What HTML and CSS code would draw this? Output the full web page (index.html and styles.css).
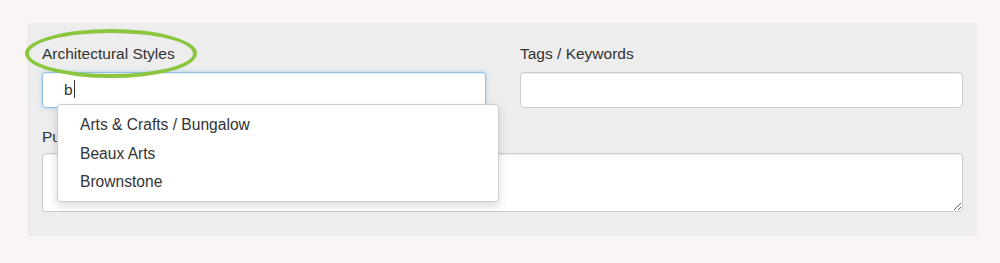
FILE: index.html
```html
<!DOCTYPE html>
<html lang="en">
<head>
    <meta charset="UTF-8">
    <meta name="viewport" content="width=device-width, initial-scale=1.0">
    <title>Property Details</title>
    <link rel="stylesheet" href="styles.css">
</head>
<body>
    <div class="panel">
        <div class="row">
            <div class="field styles-field">
                <label class="field-label">Architectural Styles</label>
                <span class="highlight"></span>
                <div class="fake-input focused">b<span class="caret"></span></div>

                <ul class="suggestions">
                    <li>Arts &amp; Crafts / Bungalow</li>
                    <li>Beaux Arts</li>
                    <li>Brownstone</li>
                </ul>
            </div>
            <div class="field">
                <label class="field-label">Tags / Keywords</label>
                <div class="fake-input"></div>
            </div>
        </div>

        <div class="field full">
            <label class="field-label">Public Notes</label>
            <textarea class="notes"></textarea>
        </div>
    </div>
</body>
</html>
```

FILE: styles.css
```css
body {
    font-family: "Liberation Sans", Arial, sans-serif;
    margin: 0;
    padding: 23px 23px 27px 27px;
    background-color: #faf5f4;
    color: #333;
}
.panel {
    background-color: #ededed;
    padding: 21px 14px 24px 15px;
}
.row {
    display: grid;
    grid-template-columns: 444px 443px;
    column-gap: 34px;
}
.field {
    position: relative;
    display: flex;
    flex-direction: column;
}
.field.full {
    margin-top: 19px;
}
.field-label {
    font-size: 15.5px;
    line-height: 20px;
    margin-bottom: 8px;
}
.full .field-label {
    margin-bottom: 6px;
}
.fake-input {
    height: 36px;
    box-sizing: border-box;
    background-color: #fff;
    border: 1px solid #ccc;
    border-radius: 4px;
    box-shadow: inset 0 1px 1px rgba(0, 0, 0, 0.075);
    padding: 7px 21px;
    font-size: 15.5px;
    line-height: 20px;
}
.fake-input.focused {
    border-color: #8fc0ec;
    box-shadow: inset 0 1px 1px rgba(0, 0, 0, 0.075), 0 0 4px rgba(102, 175, 233, 0.5);
}
.caret {
    display: inline-block;
    width: 1px;
    height: 18px;
    margin-left: 1px;
    background-color: #333;
    vertical-align: -3px;
}
.notes {
    height: 59px;
    box-sizing: border-box;
    border: 1px solid #ccc;
    border-radius: 4px;
    background-color: #fff;
    box-shadow: inset 0 1px 1px rgba(0, 0, 0, 0.075);
    margin: 0;
}
/* green annotation ring round the label */
.highlight {
    position: absolute;
    left: -17px;
    top: -15px;
    width: 172px;
    height: 49px;
    box-sizing: border-box;
    border: 4.5px solid #8cc63f;
    border-radius: 50%;
}
.suggestions {
    position: absolute;
    left: 15px;
    top: 60px;
    width: 442px;
    height: 98px;
    box-sizing: border-box;
    margin: 0;
    padding: 6px 0 0 0;
    list-style: none;
    background-color: #fff;
    border: 1px solid #ccc;
    border-radius: 4px;
    box-shadow: 0 4px 10px rgba(0, 0, 0, 0.15);
    z-index: 2;
}
.suggestions li {
    font-size: 15.6px;
    line-height: 28.5px;
    padding-left: 22px;
}
```
